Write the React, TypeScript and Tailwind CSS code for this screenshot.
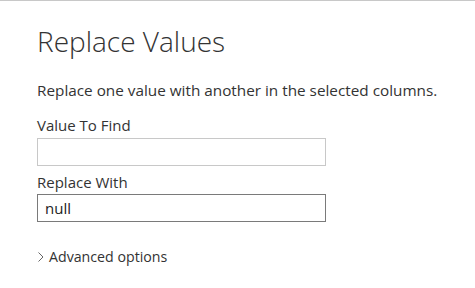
export default function App() {
  return (
    <div className="w-[475px] h-[288px] bg-white border-t border-[#c8c8c8] text-[#333333] overflow-hidden" style={{ fontFamily: '"Open Sans", "Noto Sans", sans-serif' }}>
      <div className="pl-[37px] pt-[22px]">
        <h1 className="text-[28px] font-light leading-[36px] text-[#333333]">Replace Values</h1>
        <p className="mt-[21px] text-[15.3px] leading-[20px]">Replace one value with another in the selected columns.</p>
        <div className="mt-[15px] flex flex-col">
          <label className="text-[15px] leading-[20px]">Value To Find</label>
          <input className="mt-[3px] w-[289px] h-[28px] border border-[#c8c8c8] px-[7px] text-[15px] outline-none" />
          <label className="mt-[6px] text-[15px] leading-[20px]">Replace With</label>
          <input defaultValue="null" className="mt-[2px] w-[289px] h-[28px] border border-[#7a7a7a] px-[7px] text-[15px] text-[#222] outline-none" />
        </div>
        <div className="mt-[25px] flex items-center gap-[4px] text-[14.2px] leading-[20px]">
          <svg width="8" height="10" viewBox="0 0 8 10" className="text-[#666]">
            <path d="M1.5 0.5 L6 5 L1.5 9.5" fill="none" stroke="currentColor" strokeWidth="1" />
          </svg>
          <span>Advanced options</span>
        </div>
      </div>
    </div>
  );
}
